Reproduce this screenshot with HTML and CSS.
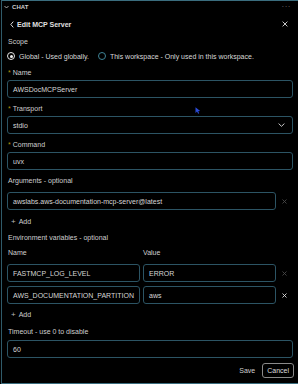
FILE: index.html
```html
<!DOCTYPE html>
<html>
<head>
<meta charset="utf-8">
<link rel="stylesheet" href="styles.css">
</head>
<body>
<div class="panel">
  <div class="topbar">
    <svg class="tb-chev" width="5" height="4" viewBox="0 0 5 4"><path d="M0.5 1 L2.5 3 L4.5 1" fill="none" stroke="#bbb" stroke-width="0.9"/></svg>
    <span class="tb-title">CHAT</span>
    <span class="tb-dots">···</span>
  </div>
  <div class="content">
    <div class="title-row">
      <svg class="back" width="4" height="7" viewBox="0 0 4 7"><path d="M3.3 0.6 L0.8 3.5 L3.3 6.4" fill="none" stroke="#ddd" stroke-width="1"/></svg>
      <span class="title">Edit MCP Server</span>
      <svg class="close" width="6" height="6" viewBox="0 0 6 6"><path d="M0.6 0.6 L5.4 5.4 M5.4 0.6 L0.6 5.4" stroke="#ddd" stroke-width="0.9"/></svg>
    </div>
    <div class="label scope">Scope</div>
    <div class="radios">
      <span class="radio on"></span><span class="radio-text">Global - Used globally.</span>
      <span class="radio off"></span><span class="radio-text">This workspace - Only used in this workspace.</span>
    </div>

    <div class="label req l-name"><span class="ast">*</span>Name</div>
    <div class="field">AWSDocMCPServer</div>

    <div class="label req l-gap"><span class="ast">*</span>Transport</div>
    <div class="field select">stdio
      <svg class="sel-chev" width="7" height="4" viewBox="0 0 7 4"><path d="M0.6 0.6 L3.5 3.3 L6.4 0.6" fill="none" stroke="#ddd" stroke-width="0.9"/></svg>
    </div>

    <div class="label req l-gap"><span class="ast">*</span>Command</div>
    <div class="field">uvx</div>

    <div class="label l-gap sec">Arguments - optional</div>
    <div class="row args">
      <div class="field grow">awslabs.aws-documentation-mcp-server@latest</div>
      <span class="rm dim"><svg width="5" height="5" viewBox="0 0 5 5"><path d="M0.5 0.5 L4.5 4.5 M4.5 0.5 L0.5 4.5" stroke="currentColor" stroke-width="0.9"/></svg></span>
    </div>
    <div class="add a1"><span class="plus">+</span>Add</div>

    <div class="label env">Environment variables - optional</div>
    <div class="env-head"><span>Name</span><span>Value</span></div>
    <div class="env-row r1">
      <div class="field">FASTMCP_LOG_LEVEL</div>
      <div class="field">ERROR</div>
      <span class="rm dim"><svg width="5" height="5" viewBox="0 0 5 5"><path d="M0.5 0.5 L4.5 4.5 M4.5 0.5 L0.5 4.5" stroke="currentColor" stroke-width="0.9"/></svg></span>
    </div>
    <div class="env-row r2">
      <div class="field">AWS_DOCUMENTATION_PARTITION</div>
      <div class="field">aws</div>
      <span class="rm"><svg width="5" height="5" viewBox="0 0 5 5"><path d="M0.5 0.5 L4.5 4.5 M4.5 0.5 L0.5 4.5" stroke="currentColor" stroke-width="0.9"/></svg></span>
    </div>
    <div class="add a2"><span class="plus">+</span>Add</div>

    <div class="label timeout">Timeout - use 0 to disable</div>
    <div class="field">60</div>

    <div class="actions">
      <span class="save">Save</span>
      <span class="cancel">Cancel</span>
    </div>
  </div>
  <svg class="cursor" width="6" height="7" viewBox="0 0 6 7"><path d="M0.5 0.3 L0.5 6 L2 4.6 L3.2 6.8 L4.2 6.3 L3.1 4.2 L5.2 4.1 Z" fill="#2b4bd6"/></svg>
</div>
</body>
</html>
```

FILE: styles.css
```css
* { box-sizing: border-box; }
html, body { margin: 0; padding: 0; background: #000; }
body {
  width: 298px;
  height: 384px;
  overflow: hidden;
  font-family: "Liberation Sans", Arial, sans-serif;
  font-size: 7px;
  color: #cfcfcf;
}
.panel {
  position: relative;
  margin-left: 1px;
  height: 384px;
  border-top: 1px solid #3a6d7e;
  border-left: 1px solid #2f5a69;
  border-bottom: 1px solid #3a6d7e;
  background: #000;
}
.topbar {
  height: 11px;
  display: flex;
  align-items: center;
  padding-left: 2px;
}
.tb-chev { margin-right: 3px; }
.tb-title { font-weight: bold; font-size: 6px; color: #cfcfcf; letter-spacing: 0.1px; }
.tb-dots { margin-left: auto; margin-right: 7px; color: #777; font-size: 8px; letter-spacing: 0.5px; }

.content {
  display: flex;
  flex-direction: column;
  padding: 0 5px 0 5px;
}
.title-row {
  margin-top: 6px;
  height: 12px;
  display: flex;
  align-items: center;
}
.back { margin-left: 3px; margin-right: 3px; }
.title { font-weight: bold; font-size: 7px; color: #e0e0e0; }
.close { margin-left: auto; margin-right: 5px; }

.label {
  height: 10px;
  line-height: 10px;
  padding-left: 1px;
  color: #cfcfcf;
  white-space: nowrap;
}
.scope { margin-top: 7px; }
.ast { color: #b8930c; margin-right: 2px; font-size: 7px; }

.radios {
  margin-top: 4px;
  height: 10px;
  display: flex;
  align-items: center;
  white-space: nowrap;
}
.radio {
  width: 8px;
  height: 8px;
  border-radius: 50%;
  flex: none;
  position: relative;
}
.radio.on { border: 1px solid #e6e6e6; }
.radio.on::after {
  content: "";
  position: absolute;
  left: 1.5px; top: 1.5px;
  width: 3px; height: 3px;
  border-radius: 50%;
  background: #f0f0f0;
}
.radio.off { border: 1px solid #3f8497; margin-left: 9px; }
.radio-text { margin-left: 4px; color: #d8d8d8; }

.l-name { margin-top: 7px; margin-bottom: 2px; }
.l-gap { margin-top: 6px; margin-bottom: 2px; }
.sec { margin-bottom: 6px; }

.field {
  height: 18px;
  border: 1px solid #2c5464;
  border-radius: 3px;
  padding-left: 5px;
  display: flex;
  align-items: center;
  color: #d6d6d6;
  white-space: nowrap;
  overflow: hidden;
  background: #000;
}
.select { justify-content: space-between; padding-right: 7px; }

.row { display: flex; align-items: center; }
.grow { flex: 1; }
.rm {
  width: 17px;
  flex: none;
  display: flex;
  justify-content: center;
  align-items: center;
  color: #dcdcdc;
}
.rm.dim { color: #4a4a4a; }

.add {
  height: 10px;
  display: flex;
  align-items: center;
  padding-left: 4px;
  color: #cfcfcf;
}
.plus { font-size: 8px; margin-right: 3px; color: #bbb; }
.a1 { margin-top: 6px; }
.env { margin-top: 7px; }
.env-head {
  margin-top: 5px;
  height: 10px;
  line-height: 10px;
  display: grid;
  grid-template-columns: 135px 133px;
  padding-left: 1px;
}
.env-row {
  display: grid;
  grid-template-columns: 133px 136px 17px;
}
.env-row .field:nth-child(2) { margin-left: 3px; }
.r1 { margin-top: 6px; }
.r2 { margin-top: 4px; }
.a2 { margin-top: 5px; }
.timeout { margin-top: 8px; margin-bottom: 3px; }

.actions {
  margin-top: 5px;
  display: flex;
  justify-content: flex-end;
  align-items: center;
  gap: 7px;
}
.save { color: #cfcfcf; }
.cancel {
  height: 15px;
  line-height: 13px;
  padding: 0 4px;
  border: 1px solid #8a8a8a;
  border-radius: 3px;
  color: #dedede;
  margin-right: -1px;
}
.cursor { position: absolute; left: 193px; top: 106px; }
```
